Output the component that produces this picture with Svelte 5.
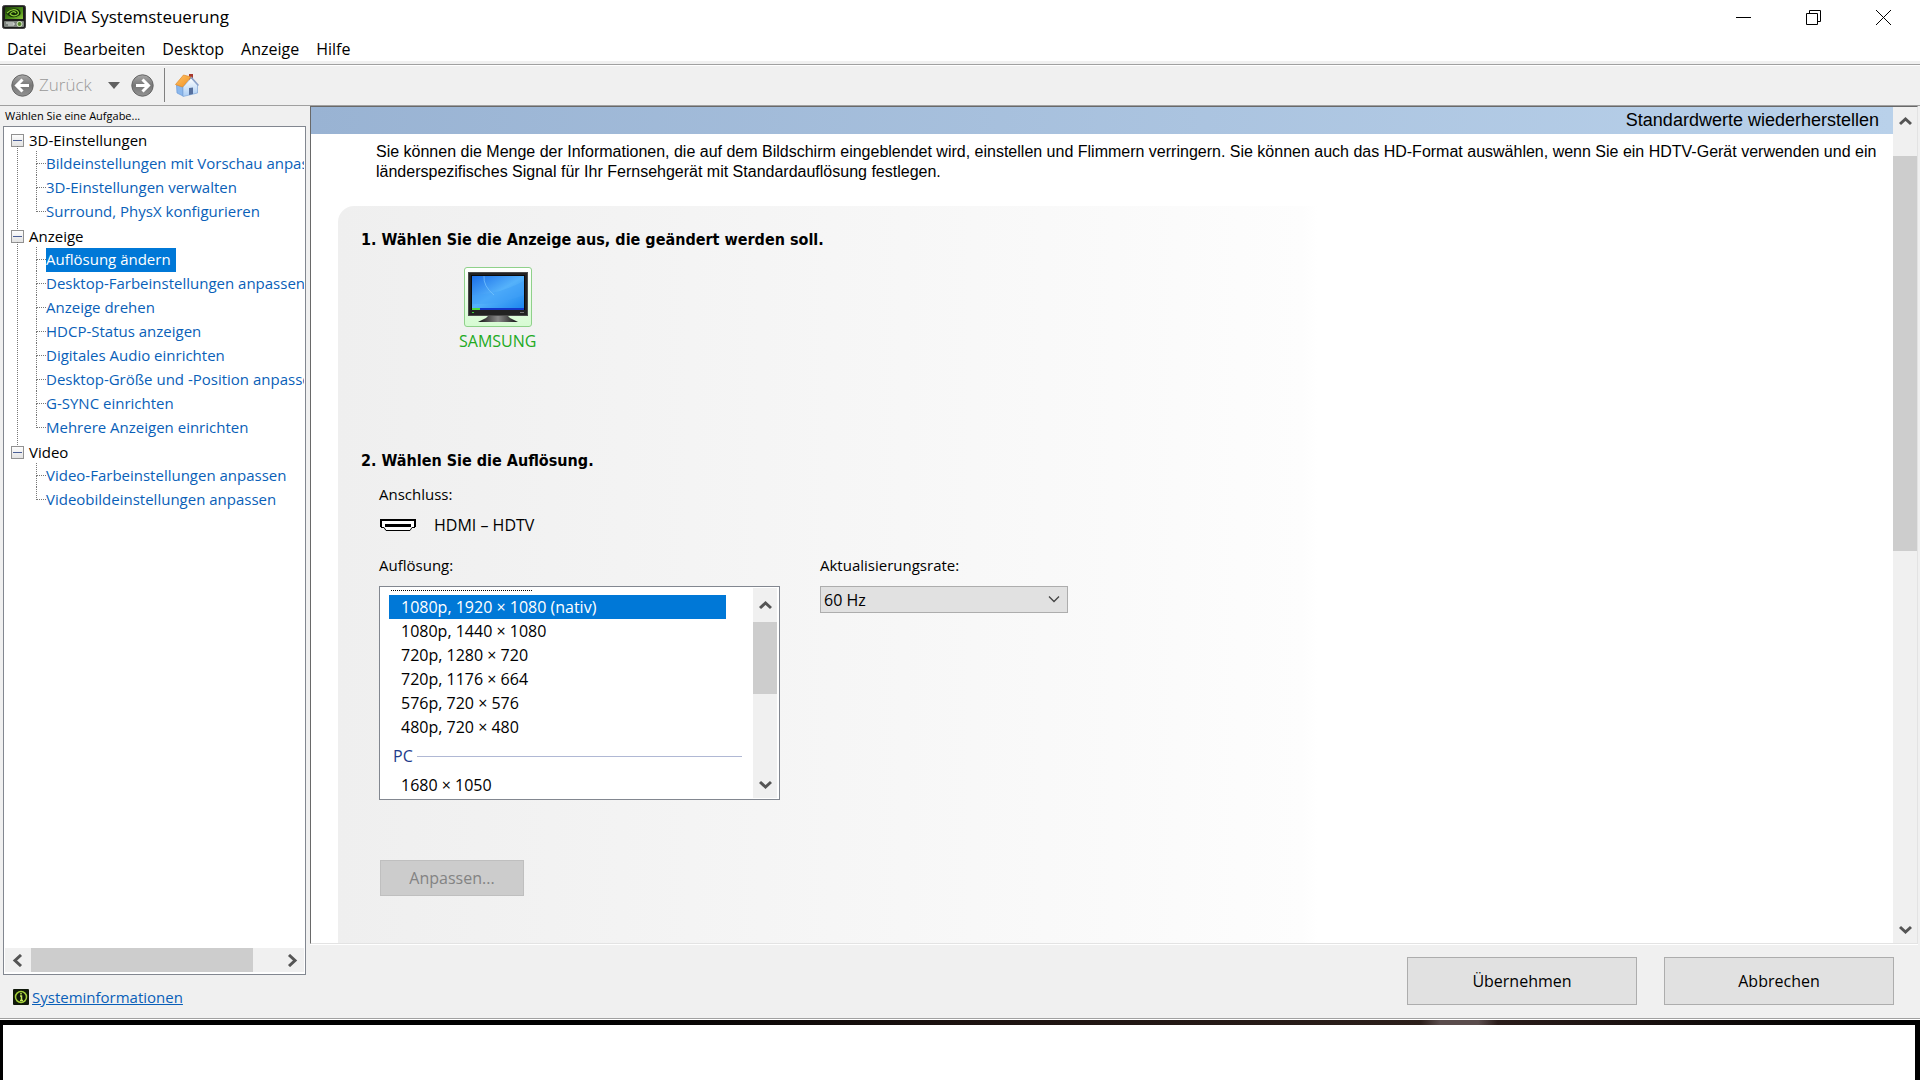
<script lang="ts">
  type Group = { name: string; items: string[] };

  const menu = ['Datei', 'Bearbeiten', 'Desktop', 'Anzeige', 'Hilfe'];

  const groups: Group[] = [
    {
      name: '3D-Einstellungen',
      items: [
        'Bildeinstellungen mit Vorschau anpassen',
        '3D-Einstellungen verwalten',
        'Surround, PhysX konfigurieren'
      ]
    },
    {
      name: 'Anzeige',
      items: [
        'Auflösung ändern',
        'Desktop-Farbeinstellungen anpassen',
        'Anzeige drehen',
        'HDCP-Status anzeigen',
        'Digitales Audio einrichten',
        'Desktop-Größe und -Position anpassen',
        'G-SYNC einrichten',
        'Mehrere Anzeigen einrichten'
      ]
    },
    {
      name: 'Video',
      items: ['Video-Farbeinstellungen anpassen', 'Videobildeinstellungen anpassen']
    }
  ];

  const hdModes = [
    '1080p, 1920 × 1080 (nativ)',
    '1080p, 1440 × 1080',
    '720p, 1280 × 720',
    '720p, 1176 × 664',
    '576p, 720 × 576',
    '480p, 720 × 480'
  ];
  const pcModes = ['1680 × 1050'];

  let task = $state('Auflösung ändern');
  let mode = $state(hdModes[0]);
  let rate = $state('60 Hz');
  let closed = $state<string[]>([]);

  function toggle(name: string) {
    closed = closed.includes(name) ? closed.filter((n) => n !== name) : [...closed, name];
  }
</script>

{#snippet chevron(points: string)}
  <svg width="13" height="13" viewBox="0 0 13 13" aria-hidden="true">
    <polyline {points} fill="none" stroke="#555" stroke-width="3" />
  </svg>
{/snippet}

{#snippet option(text: string)}
  <button
    class="option"
    class:selected={mode === text}
    role="option"
    aria-selected={mode === text}
    onclick={() => (mode = text)}>{text}</button>
{/snippet}

<div class="screen">
  <div class="window">
    <header class="titlebar">
      <svg width="24" height="24" viewBox="0 0 24 24" aria-hidden="true">
        <defs>
          <linearGradient id="badge" x1="0" y1="0" x2="1" y2="1">
            <stop offset="0" stop-color="#1c4008" />
            <stop offset="0.6" stop-color="#4c8e18" />
            <stop offset="1" stop-color="#8cc63c" />
          </linearGradient>
        </defs>
        <rect x="0.5" y="0.5" width="23" height="23" rx="2" fill="#1c1c1c" stroke="#444" />
        <rect x="3" y="2" width="18" height="12" fill="url(#badge)" />
        <path d="M4 8 Q9 2 16 4 Q20 7 18 10 Q12 14 7 11 Z" fill="#122c06" />
        <path d="M5 8 Q10 3 15 5.500 Q18 8 15 10 Q11 12 8 9 Q11 5 14 8" fill="none" stroke="#8ccc38" stroke-width="1.200" />
        <rect x="2" y="16" width="20" height="6" rx="1" fill="#7c827c" />
        <path d="M4 18 H12 V20 H6" fill="none" stroke="#e4e8e4" />
        <circle cx="17.500" cy="19" r="2.500" fill="#55852c" stroke="#d8e8c8" />
      </svg>
      <h1>NVIDIA Systemsteuerung</h1>
      <div class="controls">
        <button aria-label="Minimieren">
          <svg width="15" height="15" viewBox="0 0 15 15"><path d="M0 7.500 H15" stroke="#000" /></svg>
        </button>
        <button aria-label="Wiederherstellen">
          <svg width="15" height="15" viewBox="0 0 15 15">
            <path d="M0.500 3.500 H11.500 V14.500 H0.500 Z M3.500 3.500 V0.500 H14.500 V11.500 H11.500" fill="none" stroke="#000" />
          </svg>
        </button>
        <button aria-label="Schließen">
          <svg width="15" height="15" viewBox="0 0 15 15"><path d="M0 0 L15 15 M15 0 L0 15" stroke="#000" /></svg>
        </button>
      </div>
    </header>

    <nav class="menu">
      {#each menu as entry}
        <button>{entry}</button>
      {/each}
    </nav>

    <div class="toolbar">
      <button class="back" disabled>
        <svg width="23" height="23" viewBox="0 0 23 23" aria-hidden="true">
          <defs>
            <linearGradient id="disc" x1="0" y1="0" x2="0" y2="1">
              <stop offset="0" stop-color="#a8a8a8" />
              <stop offset="0.5" stop-color="#777" />
              <stop offset="1" stop-color="#939393" />
            </linearGradient>
          </defs>
          <circle cx="11.500" cy="11.500" r="10.700" fill="url(#disc)" stroke="#666" />
          <path d="M18 11.500 H6 M11.500 5.500 L5.500 11.500 L11.500 17.500" fill="none" stroke="#fff" stroke-width="3" />
        </svg>
        <span>Zurück</span>
      </button>
      <button class="history" aria-label="Verlauf">
        <svg width="12" height="7" viewBox="0 0 12 7"><path d="M0 0 H12 L6 7 Z" fill="#606060" /></svg>
      </button>
      <button class="forward" aria-label="Vorwärts">
        <svg width="23" height="23" viewBox="0 0 23 23">
          <circle cx="11.500" cy="11.500" r="10.700" fill="url(#disc)" stroke="#666" />
          <path d="M5 11.500 H17 M11.500 5.500 L17.500 11.500 L11.500 17.500" fill="none" stroke="#fff" stroke-width="3" />
        </svg>
      </button>
      <span class="divider"></span>
      <button class="home" aria-label="Startseite">
        <svg width="24" height="24" viewBox="0 0 24 24">
          <defs>
            <linearGradient id="roof" x1="0" y1="0" x2="1" y2="1">
              <stop offset="0" stop-color="#ffc266" />
              <stop offset="1" stop-color="#f09020" />
            </linearGradient>
            <linearGradient id="wall" x1="0" y1="0" x2="0" y2="1">
              <stop offset="0" stop-color="#fff" />
              <stop offset="1" stop-color="#a9cdf5" />
            </linearGradient>
          </defs>
          <rect x="14" y="1" width="4" height="7" fill="#a8382c" />
          <path d="M1.500 12 L8 14 V23 L2 20 Z" fill="#8cb8ec" stroke="#6a9ad8" stroke-width="0.700" />
          <path d="M8 14 L16 5 L22.500 12 V20 L8 23.500 Z" fill="url(#wall)" stroke="#7fa6d8" stroke-width="0.700" />
          <path d="M14 15 L18 14.500 V21 L14 22 Z" fill="#56709e" />
          <path d="M0.500 11.500 L8.500 2 L16 4 L7.500 14 Z" fill="url(#roof)" stroke="#e08a28" stroke-width="0.700" />
          <path d="M16 4 L23.500 12.500" stroke="#8aa0c8" stroke-width="1.500" />
        </svg>
      </button>
    </div>

    <div class="body">
      <aside>
        <p class="hint">Wählen Sie eine Aufgabe...</p>
        <div class="tree">
          <ul class="groups">
            {#each groups as group}
              <li>
                <div class="group">
                  <button
                    class="expander"
                    aria-label={group.name}
                    aria-expanded={!closed.includes(group.name)}
                    onclick={() => toggle(group.name)}
                  >
                    <svg width="13" height="13" viewBox="0 0 13 13">
                      <path d="M2 6.500 H11" stroke="#4b5f96" />
                      {#if closed.includes(group.name)}<path d="M6.500 2 V11" stroke="#4b5f96" />{/if}
                    </svg>
                  </button>
                  <span>{group.name}</span>
                </div>
                {#if !closed.includes(group.name)}
                  <ul class="tasks">
                    {#each group.items as item}
                      <li>
                        <button class="task" class:active={task === item} onclick={() => (task = item)}>{item}</button>
                      </li>
                    {/each}
                  </ul>
                {/if}
              </li>
            {/each}
          </ul>
          <div class="hscroll">
            <button aria-label="Nach links">{@render chevron('9,1 3,6.5 9,12')}</button>
            <div class="track"><div class="thumb"></div></div>
            <button aria-label="Nach rechts">{@render chevron('4,1 10,6.5 4,12')}</button>
          </div>
        </div>
        <div class="sysinfo">
          <svg width="16" height="16" viewBox="0 0 16 16" aria-hidden="true">
            <rect width="16" height="16" rx="1" fill="#10180a" />
            <circle cx="8" cy="8" r="5.500" fill="none" stroke="#a4cf3a" stroke-width="1.500" />
            <path d="M8 4 V5.500 M7 7 H8.500 V11.500 M7 11.500 H10" fill="none" stroke="#c4e85a" stroke-width="1.500" />
          </svg>
          <a href="#systeminformationen">Systeminformationen</a>
        </div>
      </aside>

      <div class="content">
        <div class="view">
          <main>
            <div class="banner"><button>Standardwerte wiederherstellen</button></div>
            <p class="intro">
              Sie können die Menge der Informationen, die auf dem Bildschirm eingeblendet wird, einstellen und Flimmern
              verringern. Sie können auch das HD-Format auswählen, wenn Sie ein HDTV-Gerät verwenden und ein
              länderspezifisches Signal für Ihr Fernsehgerät mit Standardauflösung festlegen.
            </p>
            <div class="panel">
              <section class="displays">
                <h2>1. Wählen Sie die Anzeige aus, die geändert werden soll.</h2>
                <button class="display">
                  <span class="frame">
                    <svg width="60" height="54" viewBox="0 0 60 54" aria-hidden="true">
                      <defs>
                        <linearGradient id="sky" x1="0" y1="0" x2="1" y2="1">
                          <stop offset="0" stop-color="#1a6ee8" />
                          <stop offset="0.5" stop-color="#55b2fb" />
                          <stop offset="1" stop-color="#1c86ee" />
                        </linearGradient>
                        <linearGradient id="foot" x1="0" y1="0" x2="1" y2="0">
                          <stop offset="0" stop-color="#111" />
                          <stop offset="0.5" stop-color="#888" />
                          <stop offset="1" stop-color="#111" />
                        </linearGradient>
                      </defs>
                      <rect y="2" width="60" height="44" fill="#4a4a4a" />
                      <rect x="1" y="3" width="58" height="42" fill="#222" />
                      <rect x="3" y="5" width="54" height="35" fill="#0a0a0a" />
                      <rect x="4" y="6" width="52" height="32" fill="url(#sky)" />
                      <path d="M4 25 Q30 25 56 11 V25 Q32 35 4 34 Z" fill="#3fa0f8" opacity="0.500" />
                      <path d="M16 6 Q15 16 26 25" fill="none" stroke="#7cc8ff" opacity="0.700" />
                      <rect x="4" y="38" width="52" height="2" fill="#1238c8" />
                      <rect x="4" y="38" width="8" height="2" fill="#4cd83c" />
                      <rect x="4" y="42" width="2" height="1" fill="#3ad03a" />
                      <rect x="52" y="42" width="4" height="1" fill="#777" />
                      <path d="M20 46 H40 L42 48 L50 52 H10 L18 48 Z" fill="url(#foot)" />
                    </svg>
                  </span>
                  SAMSUNG
                </button>
              </section>

              <section>
                <h2>2. Wählen Sie die Auflösung.</h2>
                <div class="settings">
                  <p class="label">Anschluss:</p>
                  <div class="port">
                    <svg width="36" height="12" viewBox="0 0 36 12" aria-hidden="true">
                      <path d="M1 1 H35 V8 H32 L30 11 H6 L4 8 H1 Z" fill="#fff" />
                      <path d="M1 8 V1 H35 V8" fill="none" stroke="#000" stroke-width="2" />
                      <path d="M1 8.500 H4 L6 11.500 H30 L32 8.500 H35" fill="none" stroke="#000" />
                      <rect x="5" y="5" width="26" height="3" fill="#000" />
                    </svg>
                    <span>HDMI – HDTV</span>
                  </div>
                  <div class="fields">
                    <div class="resolution">
                      <p class="label" id="resolution-label">Auflösung:</p>
                      <div class="listbox">
                        <div class="options" role="listbox" aria-labelledby="resolution-label">
                          <span class="cut"></span>
                          {#each hdModes as text}
                            {@render option(text)}
                          {/each}
                          <div class="legend"><span>PC</span></div>
                          {#each pcModes as text}
                            {@render option(text)}
                          {/each}
                        </div>
                        <div class="vscroll">
                          <button aria-label="Nach oben">{@render chevron('1,9 6.5,4 12,9')}</button>
                          <div class="track"><div class="thumb"></div></div>
                          <button aria-label="Nach unten">{@render chevron('1,4 6.5,9 12,4')}</button>
                        </div>
                      </div>
                    </div>
                    <div class="rate">
                      <label class="label" for="rate">Aktualisierungsrate:</label>
                      <div class="combo">
                        <select id="rate" bind:value={rate}>
                          <option>60 Hz</option>
                          <option>59 Hz</option>
                          <option>50 Hz</option>
                        </select>
                        <svg width="12" height="7" viewBox="0 0 12 7" aria-hidden="true">
                          <path d="M1 0.500 L6 5.500 L11 0.500" fill="none" stroke="#444" stroke-width="1.300" />
                        </svg>
                      </div>
                    </div>
                  </div>
                  <button class="customize" disabled>Anpassen...</button>
                </div>
              </section>
            </div>
          </main>
          <div class="vscroll page">
            <button aria-label="Nach oben">{@render chevron('1,9 6.5,4 12,9')}</button>
            <div class="track"><div class="thumb"></div></div>
            <button aria-label="Nach unten">{@render chevron('1,4 6.5,9 12,4')}</button>
          </div>
        </div>
        <footer>
          <button>Übernehmen</button>
          <button>Abbrechen</button>
        </footer>
      </div>
    </div>
  </div>
  <div class="desktop"></div>
  <div class="below"></div>
</div>

<style>
  :global(body) {
    margin: 0;
    background: #fff;
  }

  .screen {
    display: flex;
    flex-direction: column;
    height: 100vh;
    font: 16px/24px 'Open Sans', 'Noto Sans', sans-serif;
    color: #000;
  }

  .screen :is(button, select) {
    font: inherit;
    color: inherit;
    padding: 0;
    border: 0;
    border-radius: 0;
    background: none;
  }

  ul {
    margin: 0;
    padding: 0;
    list-style: none;
  }

  h1,
  h2,
  p {
    margin: 0;
  }

  svg {
    display: block;
    flex: none;
  }

  .window {
    flex: 1;
    min-height: 0;
    display: flex;
    flex-direction: column;
    background: #f0f0f0;
    border-bottom: 1px solid #a0a0a0;
  }

  .titlebar {
    display: flex;
    align-items: center;
    gap: 5px;
    height: 34px;
    padding: 0 2px;
    background: #fff;
  }

  h1 {
    flex: 1;
    font-size: 17px;
    font-weight: 400;
  }

  .controls {
    display: flex;
  }

  .screen .controls button {
    display: flex;
    align-items: center;
    justify-content: center;
    width: 70px;
    height: 34px;
  }

  .menu {
    display: flex;
    gap: 17px;
    height: 28px;
    padding: 3px 7px 0;
    box-sizing: border-box;
    background: #fff;
    border-bottom: 1px solid #f0f0f0;
  }

  .toolbar {
    display: flex;
    align-items: center;
    height: 40px;
    padding-left: 11px;
    margin-top: 2px;
    border-top: 1px solid #a0a0a0;
    border-bottom: 1px solid #a0a0a0;
    box-shadow: inset 0 1px #fff;
  }

  .back {
    display: flex;
    align-items: center;
    gap: 5px;
  }

  .screen .back span {
    font-size: 17px;
    font-weight: 300;
    color: #999;
  }

  .history {
    margin-left: 16px;
  }

  .forward {
    margin-left: 11px;
  }

  .divider {
    width: 1px;
    height: 34px;
    margin: 0 10px;
    background: #808080;
  }

  .body {
    flex: 1;
    min-height: 0;
    display: flex;
  }

  aside {
    width: 303px;
    flex: none;
    display: flex;
    flex-direction: column;
    padding: 0 4px 0 3px;
  }

  .hint {
    padding-left: 2px;
    font-size: 11px;
    line-height: 20px;
  }

  .tree {
    flex: 1;
    min-height: 0;
    display: flex;
    flex-direction: column;
    padding: 1px;
    background: #fff;
    border: 1px solid #828790;
  }

  .groups {
    flex: 1;
    overflow: hidden;
    font-size: 15px;
  }

  .groups > li {
    position: relative;
  }

  .groups > li:not(:last-child)::before {
    content: '';
    position: absolute;
    left: 12px;
    top: 18px;
    bottom: -6px;
    border-left: 1px dotted #777;
  }

  .group {
    display: flex;
    align-items: center;
    gap: 5px;
    height: 24px;
    padding-left: 6px;
  }

  .screen .expander {
    width: 13px;
    height: 13px;
    background: linear-gradient(#fff, #e0e0e0);
    outline: 1px solid #919191;
    outline-offset: -1px;
  }

  .tasks {
    margin: -1px 0 1px;
  }

  .tasks li {
    position: relative;
    height: 24px;
    padding-left: 41px;
    white-space: nowrap;
  }

  .tasks li::before {
    content: '';
    position: absolute;
    left: 31px;
    top: 0;
    width: 9px;
    height: 12px;
    border-left: 1px dotted #777;
    border-bottom: 1px dotted #777;
  }

  .tasks li:not(:last-child)::after {
    content: '';
    position: absolute;
    left: 31px;
    top: 12px;
    height: 12px;
    border-left: 1px dotted #777;
  }

  .screen .task {
    height: 24px;
    padding: 0 5px 2px 0;
    line-height: 22px;
    color: #0a5fb8;
  }

  .screen .task.active {
    background: #0078d7;
    color: #fff;
  }

  .hscroll {
    display: flex;
    height: 24px;
    background: #f0f0f0;
    margin-bottom: 1px;
  }

  .hscroll button,
  .vscroll button {
    display: flex;
    align-items: center;
    justify-content: center;
  }

  .hscroll button {
    width: 26px;
  }

  .track {
    flex: 1;
  }

  .thumb {
    background: #cdcdcd;
  }

  .hscroll .thumb {
    width: 90%;
    height: 24px;
  }

  .sysinfo {
    display: flex;
    align-items: center;
    gap: 3px;
    height: 43px;
    padding-left: 10px;
  }

  .sysinfo a {
    font-size: 15px;
    color: #0a5fb8;
  }

  .content {
    flex: 1;
    min-width: 0;
    display: flex;
    flex-direction: column;
    padding-right: 2px;
  }

  .view {
    flex: 1;
    min-height: 0;
    display: flex;
    background: #fff;
    border: 1px solid #e3e3e3;
    border-top-color: #696969;
    border-left-color: #696969;
    box-shadow: 0 1px #fff;
  }

  main {
    flex: 1;
    min-width: 0;
    display: flex;
    flex-direction: column;
    overflow: hidden;
  }

  .banner {
    flex: none;
    height: 27px;
    padding-right: 14px;
    text-align: right;
    background: linear-gradient(to right, #99b3d3, #b9d1ea);
  }

  .screen .banner button {
    font: 18px/27px 'Liberation Sans', Arial, sans-serif;
  }

  .intro {
    flex: none;
    padding: 8px 8px 0 65px;
    font: 16px/20px 'Liberation Sans', Arial, sans-serif;
  }

  .panel {
    flex: 1;
    margin: 24px 0 0 27px;
    padding: 22px 0 0 23px;
    border-radius: 16px 0 0 0;
    background: linear-gradient(to right, #efefef, #fafafa 50%, #fdfdfd 62%, #fff 63%);
  }

  h2 {
    font: bold 16px/24px 'DejaVu Sans Condensed', 'DejaVu Sans', sans-serif;
  }

  .displays {
    height: 221px;
  }

  .screen .display {
    display: flex;
    flex-direction: column;
    align-items: center;
    gap: 2px;
    margin: 15px 0 0 98px;
    color: #22aa22;
  }

  .frame {
    padding: 2px 3px;
    border: 1px solid #8fd18a;
    border-radius: 3px;
    background: linear-gradient(#fff, #d6fbd2);
  }

  .settings {
    padding: 9px 0 0 18px;
  }

  .label {
    display: block;
    font-size: 15px;
  }

  .port {
    display: flex;
    align-items: center;
    gap: 18px;
    padding: 7px 0 16px 1px;
  }

  .fields {
    display: flex;
    gap: 40px;
  }

  .resolution {
    width: 401px;
  }

  .rate {
    width: 248px;
  }

  .listbox {
    display: flex;
    height: 210px;
    margin-top: 9px;
    padding: 1px;
    background: #fff;
    border: 1px solid #828790;
    overflow: hidden;
  }

  .options {
    flex: 1;
    display: flex;
    flex-direction: column;
    padding: 2px 27px 0 8px;
  }

  .cut {
    width: 141px;
    height: 4px;
    margin-left: 2px;
    border-top: 1px dotted #000;
  }

  .screen .option {
    height: 24px;
    padding-left: 12px;
    line-height: 24px;
    text-align: left;
  }

  .screen .option.selected {
    background: #0078d7;
    color: #fff;
  }

  .legend {
    display: flex;
    align-items: center;
    gap: 4px;
    height: 34px;
    margin-right: -16px;
    padding-left: 4px;
    color: #1e3c8c;
  }

  .legend::after {
    content: '';
    flex: 1;
    border-top: 1px solid #b0b8d4;
  }

  .vscroll {
    display: flex;
    flex-direction: column;
    width: 24px;
    flex: none;
    margin-right: 1px;
    background: #f0f0f0;
  }

  .vscroll button {
    height: 34px;
  }

  .vscroll button:last-child {
    height: 27px;
  }

  .vscroll .thumb {
    height: 48%;
  }

  .page {
    margin: 0;
  }

  .page button {
    height: 28px;
  }

  .page .track {
    padding-top: 21px;
  }

  .page .thumb {
    height: 52%;
  }

  .combo {
    display: grid;
    align-items: center;
    margin-top: 9px;
  }

  .combo select,
  .combo svg {
    grid-area: 1 / 1;
  }

  .combo svg {
    justify-self: end;
    margin-right: 8px;
    pointer-events: none;
  }

  .screen .combo select {
    appearance: none;
    height: 27px;
    padding-left: 3px;
    background: #e1e1e1;
    border: 1px solid #adadad;
  }

  .screen .customize {
    width: 144px;
    height: 36px;
    margin: 60px 0 0 1px;
    background: #ccc;
    border: 1px solid #bfbfbf;
    color: #838383;
  }

  footer {
    display: flex;
    justify-content: flex-end;
    gap: 27px;
    padding: 13px 24px;
  }

  .screen footer button {
    width: 230px;
    height: 48px;
    background: #e1e1e1;
    border: 1px solid #adadad;
  }

  .desktop {
    flex: none;
    height: 5px;
    border-top: 1px solid #fff;
    background: linear-gradient(to right, #000 30%, #1c1210 50%, #2c1f1b 74%, #5a4c4c 75% 77%, #2a1c1a 78%, #000 97%);
  }

  .below {
    flex: none;
    height: 55px;
    background: #fff;
    border: solid #000;
    border-width: 0 5px 0 3px;
    box-sizing: border-box;
  }
</style>
